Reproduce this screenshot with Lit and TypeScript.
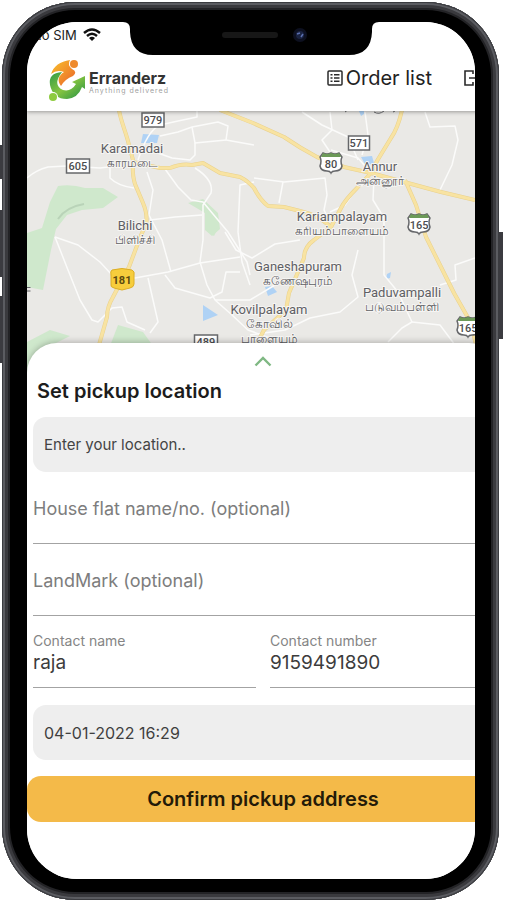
import { LitElement, html, svg, css } from "lit";
import { customElement, property } from "lit/decorators.js";

interface Place {
  x: number;
  y: number;
  name: string;
  local: string[];
}

const PLACES: Place[] = [
  { x: 132, y: 153, name: "Karamadai", local: ["காரமடை"] },
  { x: 135, y: 230, name: "Bilichi", local: ["பிளிச்சி"] },
  { x: 380, y: 171, name: "Annur", local: ["அன்னூர்"] },
  { x: 342, y: 221, name: "Kariampalayam", local: ["கரியம்பாளையம்"] },
  { x: 298, y: 271, name: "Ganeshapuram", local: ["கணேஷபுரம்"] },
  { x: 402, y: 297, name: "Paduvampalli", local: ["படுவம்பள்ளி"] },
  { x: 269, y: 314, name: "Kovilpalayam", local: ["கோவில்", "பாளையம்"] },
];

const YELLOW_ROADS = [
  "M119 110C121 122 126 132 129 145L133 160Q132 175 135 184L143 203Q148 215 146 225Q142 232 138 243L129 267L122 280L113 297Q107 307 107 317L99 345",
  "M133 162L160 168L170 168Q182 163 192 165L203 163L220 173L240 177Q248 181 254 188Q260 200 268 206L284 207L300 211Q318 215 331 227",
  "M220 110L253 123L284 137Q300 148 317 157L344 167L371 173L404 182L441 192L475 200",
  "M402 110Q398 128 391 138L377 161L371 173L357 188Q345 200 341 208L331 227L314 240Q304 247 304 258L289 293L286 310L264 330L256 345",
  "M405 180L416 205L426 237L441 267L454 293L471 323L476 345",
];

const WHITE_ROADS = [
  "M27 178Q36 170 48 167L66 166L100 168L125 165",
  "M110 167V178Q118 186 134 188",
  "M138 160Q148 130 160 125L178 121L197 117V110",
  "M160 136L178 132L192 127L218 122L228 126L226 140L254 145",
  "M192 127L195 143L226 140",
  "M195 143V155L190 160L172 158L155 152",
  "M165 169L178 187L191 200L203 202L228 232L247 262L250 275",
  "M195 168Q214 180 211 193L203 205V240L200 262",
  "M150 220L175 217L202 215",
  "M254 182L240 185L238 232L242 262L250 285",
  "M147 172L153 190L149 215L162 240L171 272",
  "M55 237L68 270L80 300L92 320L98 322L112 308L122 307L127 322L145 330",
  "M55 237L78 245L100 262L112 275L135 278L168 272L200 263L240 257",
  "M148 278L153 300L158 322L150 333",
  "M165 275L175 288L210 298L222 292L226 272L240 272",
  "M200 262L207 285L215 300L232 315L248 330L270 338",
  "M225 232L236 250L252 258L275 244L300 240",
  "M215 300L250 300L275 285",
  "M250 335L285 330L310 318L340 312L358 297L352 275L358 250",
  "M302 112L322 125L348 137L358 160",
  "M330 112L332 130L322 140L330 152",
  "M365 112L368 135L362 155",
  "M425 112L430 127L455 126L458 140L452 165L440 190",
  "M254 178L284 182L325 178L327 195L324 210L330 222",
  "M283 182L279 203",
  "M331 150L358 158L371 173",
  "M374 178L373 200L384 218L384 275L398 292L412 322L402 328L388 342",
  "M412 322L440 325L455 345",
  "M475 258L455 265L456 280L440 285",
  "M330 212L345 205L357 188",
];

const PLATES = [
  { x: 153, y: 120, w: 22, n: "979" },
  { x: 78, y: 166, w: 23, n: "605" },
  { x: 359, y: 143, w: 21, n: "571" },
  { x: 206, y: 342, w: 23, n: "489" },
];

const SHIELDS = [
  { x: 331, y: 163, n: "80" },
  { x: 419, y: 224, n: "165" },
  { x: 468, y: 327, n: "165" },
];

@customElement("area-map")
class AreaMap extends LitElement {
  static styles = css`
    :host { display: block; }
    .map { display: block; width: 100%; height: 264px; background: #eae9e6; }
    .place { font: 13px Roboto, "Noto Sans", sans-serif; fill: #5f6064; stroke: #f6f5f3; stroke-width: 2px; paint-order: stroke; text-anchor: middle; }
    .local { font-size: 12px; }
    .num { font: 500 11px Roboto, sans-serif; fill: #4b4c4f; text-anchor: middle; }
    .num-state { font-weight: 700; fill: #5c4a10; }
  `;

  render() {
    return html`
      <svg class="map" viewBox="27 111 448 264" preserveAspectRatio="xMinYMin slice" role="img" aria-label="Map of the pickup area">
        <g fill="#cfe8cc">
          <path d="M58 186Q72 184 85 188L103 188L118 197L103 208L82 210L67 215L56 229L51 250L43 290L27 287V233L42 228L50 202Z" />
          <path d="M188 203L203 199L218 213L220 229L212 236L205 230V213Z" />
          <path d="M110 346L118 325L143 332L153 346Z" />
          <path d="M27 342L50 330L70 336L50 346L27 376Z" />
          <path d="M207 231L218 228L214 236Z" />
        </g>
        <path d="M58 219Q66 207 84 204" fill="none" stroke="#b9d3b8" stroke-width="2" />
        <g fill="#afd2f5">
          <path d="M143 134L159 135L157 143L141 143Z" />
          <path d="M203 305L218 315L203 321Z" />
          <path d="M265 287L272 286L277 292L268 296Z" />
          <path d="M361 157L372 156L374 163L366 166Z" />
          <path d="M387 274L391 272L390 278L386 279Z" />
          <path d="M359 111H364V114L361 116Z" />
        </g>
        <g fill="none" stroke="#fbfbfa" stroke-width="1.500" stroke-linejoin="round">
          ${WHITE_ROADS.map((d) => svg`<path d=${d} />`)}
        </g>
        <g fill="none" stroke="#e9d18d" stroke-width="4" stroke-linejoin="round">
          ${YELLOW_ROADS.map((d) => svg`<path d=${d} />`)}
        </g>
        <g fill="none" stroke="#f8e3a2" stroke-width="3" stroke-linejoin="round">
          ${YELLOW_ROADS.map((d) => svg`<path d=${d} />`)}
        </g>
        <path d="M27 287.500H30.500M27 291H30.500M345 112L347 110.500M374 112Q379 115 384 111M393 112L395 111" fill="none" stroke="#66676b" />
        ${PLATES.map(
          (p) => svg`
            <rect x=${p.x - p.w / 2} y=${p.y - 7} width=${p.w} height="14" fill="#fff" stroke="#66676a" stroke-width="1.500" />
            <text class="num" x=${p.x} y=${p.y + 4}>${p.n}</text>`
        )}
        ${SHIELDS.map(
          (s) => svg`
            <g transform="translate(${s.x} ${s.y})">
              <path d="M-8 -10Q-4 -8 0 -10Q4 -8 8 -10L11 -6Q9 -2 11 3Q10 8 4 8Q1 8 0 10Q-1 8 -4 8Q-10 8 -11 3Q-9 -2 -11 -6Z" fill="#fff" stroke="#66676a" stroke-width="1.500" />
              <path d="M-8 -10Q-4 -8 0 -10Q4 -8 8 -10L10 -6H-10Z" fill="#6c9a58" />
              <text class="num" x="0" y="5">${s.n}</text>
            </g>`
        )}
        <path d="M112 270Q122 267 132 270Q135 271 134 276V284Q134 287 130 288L122 290L114 288Q110 287 111 284V276Q110 271 112 270Z" fill="#f7cd3c" stroke="#dcae27" />
        <text class="num num-state" x="122" y="284">181</text>
        ${PLACES.map(
          (p) => svg`
            <text class="place" x=${p.x} y=${p.y}>${p.name}</text>
            ${p.local.map((l, i) => svg`<text class="place local" x=${p.x} y=${p.y + 14 + i * 15}>${l}</text>`)}`
        )}
      </svg>
    `;
  }
}

@customElement("line-field")
class LineField extends LitElement {
  @property() label = "";
  @property() value = "";
  @property() hint = "";

  static styles = css`
    :host { display: block; min-width: 0; }
    .field { display: flex; flex-direction: column; justify-content: center; box-sizing: border-box; height: 72px; padding-top: 2px; border-bottom: 1px solid #a3a3a3; }
    .caption { font-size: 14px; line-height: 18px; color: #858585; margin-top: 2px; }
    .entry { box-sizing: border-box; width: 100%; height: 26px; padding: 0; border: 0; outline: 0; background: none; font: 19px/26px Inter, sans-serif; color: #3c3c3c; }
    .entry::placeholder { font-size: 18px; color: #7d7d7d; opacity: 1; }
  `;

  render() {
    return html`
      <div class="field">
        ${this.label ? html`<label class="caption" for="entry">${this.label}</label>` : null}
        <input class="entry" id="entry" type="text" .value=${this.value} placeholder=${this.hint} aria-label=${this.label || this.hint} />
      </div>
    `;
  }
}

@customElement("app-root")
class AppRoot extends LitElement {
  static styles = css`
    :host { display: flex; min-height: 100vh; box-sizing: border-box; padding: 2px 8px 0 2px; background: #fff; font-family: Inter, sans-serif; color: #222; overflow: hidden; }
    .phone { position: relative; flex: 1; min-width: 0; display: flex; box-sizing: border-box; padding: 20px 24px 21px 25px; border-radius: 73px; background: #000; box-shadow: inset 0 0 0 1px #3b3c40, inset 0 0 0 3px #5b5c61, inset 0 0 0 6px #3a3a3e, inset 0 0 0 8px #232326; }
    .key { position: absolute; background: #3b3b40; width: 4px; }
    .key-mute { left: -3px; top: 143px; height: 34px; }
    .key-up { left: -3px; top: 208px; height: 67px; }
    .key-down { left: -3px; top: 294px; height: 67px; }
    .key-power { right: -4px; top: 230px; height: 107px; }
    .screen { position: relative; flex: 1; min-width: 0; display: flex; flex-direction: column; overflow: hidden; border-radius: 50px; background: #fff; }
    .notch { position: absolute; top: 0; left: 50%; width: 256px; height: 33px; margin-left: -128px; z-index: 3; }
    .status { position: relative; z-index: 2; display: flex; align-items: center; gap: 6px; height: 26px; padding-left: 5px; background: #fff; font-size: 13px; line-height: 26px; }
    .content { display: flex; flex-direction: column; flex: 1; margin-right: -24px; }
    .topbar { position: relative; z-index: 1; display: flex; align-items: center; height: 63px; padding: 0 17px 0 21px; background: #fff; box-shadow: 0 1px 4px rgba(0, 0, 0, 0.35); }
    .brand { display: flex; align-items: center; gap: 3px; margin-right: auto; color: #333; text-decoration: none; }
    .mark { display: block; width: 38px; height: 42px; }
    .words { display: flex; flex-direction: column; padding-top: 5px; }
    .name { font: 700 16px/18px Inter, sans-serif; }
    .tag { font: 7px/8px Inter, sans-serif; letter-spacing: 1px; color: #a0a0a0; }
    .orders { display: flex; align-items: center; gap: 3px; height: 24px; padding: 0; border: 0; background: none; font: 20px/24px Inter, sans-serif; color: #222; margin: 0 32px 3px 0; }
    .exit { display: flex; padding: 0; border: 0; background: none; margin-bottom: 3px; }
    .map { margin-right: 24px; }
    .sheet { position: relative; z-index: 1; display: flex; flex-direction: column; flex: 1; margin-top: -32px; border-radius: 30px 30px 0 0; background: #fff; box-shadow: 0 -1px 6px rgba(0, 0, 0, 0.25); }
    .handle { display: flex; align-items: center; justify-content: center; height: 36px; padding: 0; border: 0; background: none; }
    .title { margin: 0 0 14px 10px; font-size: 20px; line-height: 24px; font-weight: 600; color: #1c1c1c; }
    .form { display: flex; flex-direction: column; padding: 0 6px; }
    .box { box-sizing: border-box; width: 100%; height: 55px; padding: 0 11px; border: 0; border-radius: 13px; outline: 0; background: #eeeeee; font: 15px/20px Inter, sans-serif; color: #3f3f3f; }
    .box::placeholder { color: #444; opacity: 1; }
    .when { margin-top: 17px; font-size: 16px; }
    .pair { display: grid; grid-template-columns: 1fr 1fr; gap: 14px; }
    .confirm { height: 46px; margin: 16px 0 57px; padding: 0; border: 0; border-radius: 14px; background: #f4ba49; font: 600 20px/24px Inter, sans-serif; color: #241a08; }
  `;

  render() {
    return html`
      <main class="phone">
        <span class="key key-mute"></span>
        <span class="key key-up"></span>
        <span class="key key-down"></span>
        <span class="key key-power"></span>
        <div class="screen">
          <svg class="notch" viewBox="0 0 256 33" aria-hidden="true">
            <path d="M0 0Q7 0 7 7V10Q8 33 30 33H226Q248 33 249 10V7Q249 0 256 0Z" />
            <rect x="99" y="10" width="56" height="6" rx="3" fill="#171717" />
            <circle cx="177" cy="13" r="7" fill="#0d1020" />
            <circle cx="177" cy="13" r="4" fill="#1a2342" />
            <path d="M174 12L177 11M178 15L180 12" stroke="#5b6fae" stroke-width="1.500" />
          </svg>
          <div class="status">
            <span>No SIM</span>
            <svg width="18" height="14" viewBox="0 0 18 14" aria-label="Wi-Fi">
              <path d="M1 5Q9 -2 17 5M4 8Q9 3.500 14 8" fill="none" stroke="#111" stroke-width="2.400" />
              <path d="M6 10Q9 7.500 12 10L9 13Z" fill="#111" />
            </svg>
          </div>
          <div class="content">
            <header class="topbar">
              <a class="brand" href="#">
                <svg class="mark" viewBox="0 0 38 42" aria-hidden="true">
                  <defs>
                    <linearGradient id="flame" x1="0" y1="0" x2="1" y2="1">
                      <stop offset="0" stop-color="#f8c22e" />
                      <stop offset="0.500" stop-color="#f2932b" />
                      <stop offset="1" stop-color="#e8622a" />
                    </linearGradient>
                    <linearGradient id="leaf" x1="0" y1="0" x2="1" y2="1">
                      <stop offset="0" stop-color="#2f9a48" />
                      <stop offset="0.500" stop-color="#86c440" />
                      <stop offset="1" stop-color="#1f8f45" />
                    </linearGradient>
                  </defs>
                  <path d="M3 15Q7 3 22 1Q19 6 24 10Q30 13 25 17Q17 20 13 27Q7 19 16 13Q9 10 3 15Z" fill="url(#flame)" />
                  <circle cx="26" cy="5" r="4" fill="#ee8a2c" />
                  <path d="M14 13Q0 14 2 26Q5 40 19 40Q30 39 34 28L37 30V17L24 23L28 25Q23 33 15 31Q4 26 14 13Z" fill="url(#leaf)" />
                  <circle cx="5" cy="38" r="5" fill="#fff" />
                  <circle cx="5" cy="38" r="4" fill="#8ecb3f" />
                </svg>
                <span class="words">
                  <span class="name">Erranderz</span>
                  <span class="tag">Anything delivered</span>
                </span>
              </a>
              <button class="orders" type="button">
                <svg width="16" height="16" viewBox="0 0 16 16" aria-hidden="true">
                  <rect x="1" y="1" width="14" height="14" rx="1" fill="none" stroke="#2a2a2a" stroke-width="1.500" />
                  <path d="M3.500 4.700H5.500M3.500 8H5.500M3.500 11.300H5.500M7 4.700H12.500M7 8H12.500M7 11.300H12.500" stroke="#2a2a2a" stroke-width="1.600" />
                </svg>
                Order list
              </button>
              <button class="exit" type="button" aria-label="Log out">
                <svg width="18" height="16" viewBox="0 0 18 16" aria-hidden="true">
                  <path d="M9 4V1H1V15H9V12M5 8H17M14 5L17 8L14 11" fill="none" stroke="#2a2a2a" stroke-width="1.600" />
                </svg>
              </button>
            </header>
            <area-map class="map"></area-map>
            <section class="sheet">
              <button class="handle" type="button" aria-label="Expand">
                <svg width="18" height="12" viewBox="0 0 18 12" aria-hidden="true">
                  <path d="M1.500 10.500L9 3L16.500 10.500" fill="none" stroke="#7fb883" stroke-width="2.400" />
                </svg>
              </button>
              <h1 class="title">Set pickup location</h1>
              <div class="form">
                <input class="box" type="text" placeholder="Enter your location.." aria-label="Location" />
                <line-field hint="House flat name/no. (optional)"></line-field>
                <line-field hint="LandMark (optional)"></line-field>
                <div class="pair">
                  <line-field label="Contact name" value="raja"></line-field>
                  <line-field label="Contact number" value="9159491890"></line-field>
                </div>
                <input class="box when" type="text" value="04-01-2022 16:29" aria-label="Pickup date and time" />
              </div>
              <button class="confirm" type="button">Confirm pickup address</button>
            </section>
          </div>
        </div>
      </main>
    `;
  }
}
